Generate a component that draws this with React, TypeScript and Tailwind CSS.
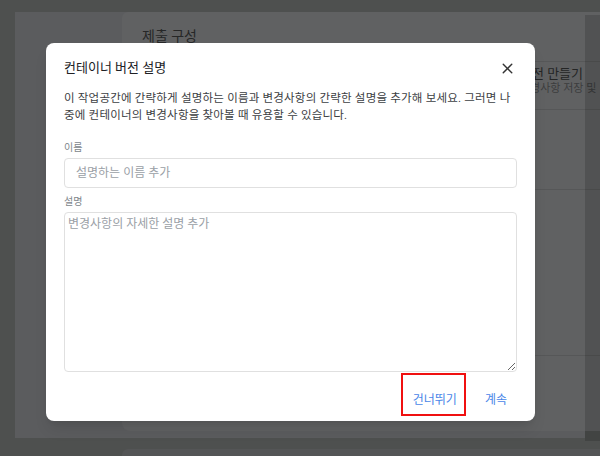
import { X } from "lucide-react";

const KR = "font-['Roboto','Noto_Sans_CJK_KR',sans-serif]";

function BackgroundPage() {
  return (
    <div className="h-[456px] w-[600px] overflow-hidden bg-[#4e504f] pt-[15px] pl-[15px]">
      <div className="h-[426px] w-[570px] bg-[#5b5c5e]">
        <div className="-mt-[3px] ml-[107px] h-[419px] w-[490px] rounded-t-[6px] rounded-bl-[8px] bg-[#606162]">
          <div className="h-[50px] border-b border-[#565758] pl-[20px] pt-[14px] text-[14px] text-[#262727]">
            제출 구성
          </div>
          <div className="h-[48px] whitespace-nowrap border-b border-[#565758] pl-[398px] pt-[4px]">
            <div className="text-[13px] leading-[16px] text-[#242525]">버전 만들기</div>
            <div className="text-[11px] leading-[14px] text-[#3c3d3e]">변경사항 저장 및</div>
          </div>
          <div className="h-[80px] border-b border-[#565758]" />
          <div className="h-[166px] border-b border-[#565758]" />
        </div>
        <div className="mt-[18px] ml-[107px] h-[20px] w-[490px] rounded-t-[6px] bg-[#545556]" />
      </div>
    </div>
  );
}

export default function App() {
  return (
    <div className={`relative h-[456px] w-[600px] overflow-hidden ${KR}`}>
      <BackgroundPage />
      {/* darker scrollbar strip on the right */}
      <div className="absolute left-[585px] top-[15px] h-[426px] w-[15px] bg-black/15" />

      <div className="absolute left-[46px] top-[43px] flex h-[378px] w-[489px] flex-col rounded-[8px] bg-white px-[18px] shadow-lg">
        <div className="flex items-center justify-between pt-[16px]">
          <h2 className="text-[13px] leading-[18px] text-[#202124]">컨테이너 버전 설명</h2>
          <X className="mr-[1px] h-[17px] w-[17px] text-[#333]" strokeWidth={2} />
        </div>
        <p className="mt-[13px] text-[11.5px] leading-[17px] tracking-[0.2px] text-[#3c4043]">
          이 작업공간에 간략하게 설명하는 이름과 변경사항의 간략한 설명을 추가해 보세요. 그러면 나중에 컨테이너의 변경사항을 찾아볼 때 유용할 수 있습니다.
        </p>
        <label className="mt-[17px] text-[10px] leading-[14px] text-[#80868b]">이름</label>
        <input
          className="mt-[3px] h-[30px] w-full rounded-[4px] border border-[#e0e0e0] px-[11px] text-[12px] outline-none placeholder:text-[#9aa0a6]"
          placeholder="설명하는 이름 추가"
        />
        <label className="mt-[7px] text-[10px] leading-[14px] text-[#80868b]">설명</label>
        <textarea
          className="mt-[3px] h-[160px] w-full resize-y rounded-[4px] border border-[#e0e0e0] px-[3px] py-[2px] text-[12px] outline-none placeholder:text-[#9aa0a6]"
          placeholder="변경사항의 자세한 설명 추가"
        />
        <div className="flex justify-end gap-[28px] pt-[20px] pr-[10px] text-[12px] leading-[16px] text-[#4a86e8]">
          <button>건너뛰기</button>
          <button>계속</button>
        </div>
      </div>

      <div className="absolute left-[401px] top-[373px] h-[43px] w-[65px] border-2 border-[#f01010]" />
    </div>
  );
}
